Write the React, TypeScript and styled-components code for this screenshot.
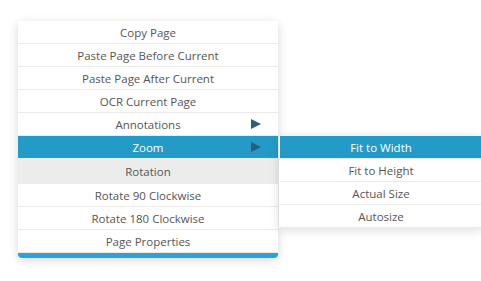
import React from "react";
import styled, { createGlobalStyle } from "styled-components";

const Global = createGlobalStyle`
  html, body { margin: 0; padding: 0; background: #ffffff; }
  body { font-family: "Open Sans", "Liberation Sans", sans-serif; }
`;

const Page = styled.div`
  width: 481px;
  height: 281px;
  overflow: hidden;
  padding: 21px 0 0 18px;
  box-sizing: border-box;
`;

const Menu = styled.div`
  position: relative;
  width: 260px;
  background: #fff;
  border-radius: 4px;
  border-bottom: 5px solid #27a5d8;
  box-shadow: 0 2px 10px rgba(0, 0, 0, 0.16);
`;

const List = styled.div`
  display: flex;
  flex-direction: column;
  border-radius: 4px 4px 0 0;
  overflow: hidden;
`;

const Row = styled.div<{ $active?: boolean; $header?: boolean }>`
  position: relative;
  height: ${(p) => (p.$header ? 24 : 22)}px;
  display: flex;
  align-items: center;
  justify-content: center;
  border-bottom: 1px solid ${(p) => (p.$header ? "#ececec" : "#ebebeb")};
  background: ${(p) => (p.$active ? "#249bc7" : p.$header ? "#ececec" : "#fff")};
  color: ${(p) => (p.$active ? "#ffffff" : "#555555")};
  font-size: 11.5px;
  white-space: nowrap;
`;

const Arrow = styled.span`
  position: absolute;
  right: 17px;
  top: 50%;
  margin-top: -5.5px;
  width: 0;
  height: 0;
  border-top: 5.5px solid transparent;
  border-bottom: 5.5px solid transparent;
  border-left: 10px solid #2b5e7d;
`;

const Sub = styled.div`
  position: absolute;
  left: 261px;
  top: 115px;
  width: 202px;
  background: #fff;
  border-left: 1px solid #ffffff;
  box-shadow: 0 2px 10px rgba(0, 0, 0, 0.14);
  display: flex;
  flex-direction: column;
`;

const mainItems: { label: string; arrow?: boolean; active?: boolean; header?: boolean }[] = [
  { label: "Copy Page" },
  { label: "Paste Page Before Current" },
  { label: "Paste Page After Current" },
  { label: "OCR Current Page" },
  { label: "Annotations", arrow: true },
  { label: "Zoom", arrow: true, active: true },
  { label: "Rotation", header: true },
  { label: "Rotate 90 Clockwise" },
  { label: "Rotate 180 Clockwise" },
  { label: "Page Properties" },
];

const subItems = ["Fit to Width", "Fit to Height", "Actual Size", "Autosize"];

export default function App() {
  return (
    <Page>
      <Global />
      <Menu>
        <List>
          {mainItems.map((it) => (
            <Row key={it.label} $active={it.active} $header={it.header}>
              {it.label}
              {it.arrow && <Arrow />}
            </Row>
          ))}
        </List>
        <Sub>
          {subItems.map((s, i) => (
            <Row key={s} $active={i === 0}>
              {s}
            </Row>
          ))}
        </Sub>
      </Menu>
    </Page>
  );
}
